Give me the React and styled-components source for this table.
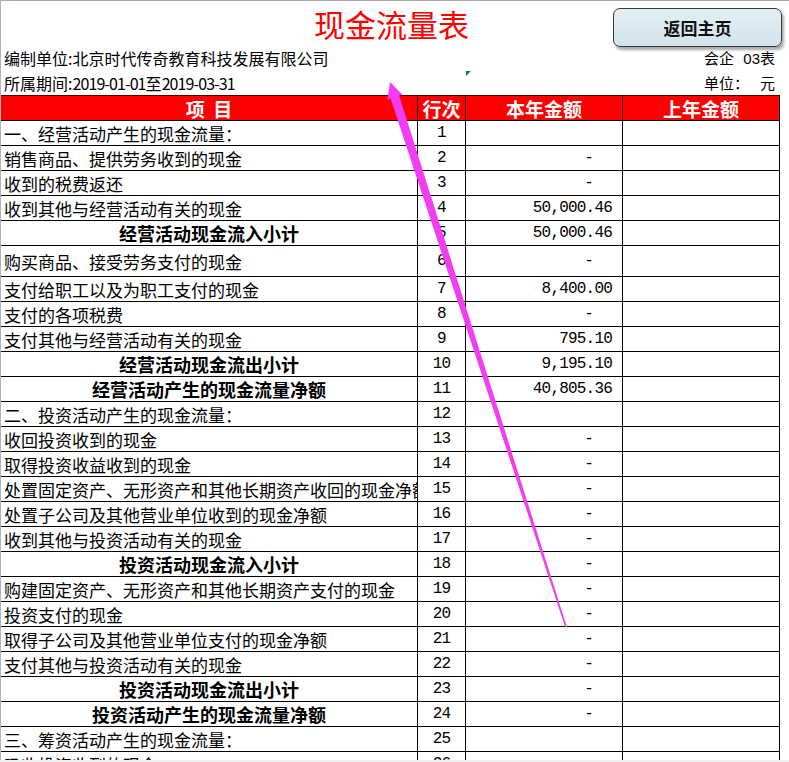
import React from "react";
import styled, { createGlobalStyle } from "styled-components";

const rows = [
  { no: 1, name: "一、经营活动产生的现金流量：", amt: "" },
  { no: 2, name: "销售商品、提供劳务收到的现金", amt: "-" },
  { no: 3, name: "收到的税费返还", amt: "-" },
  { no: 4, name: "收到其他与经营活动有关的现金", amt: "50,000.46" },
  { no: 5, name: "经营活动现金流入小计", amt: "50,000.46", bold: true },
  { no: 6, name: "购买商品、接受劳务支付的现金", amt: "-", h: 31 },
  { no: 7, name: "支付给职工以及为职工支付的现金", amt: "8,400.00" },
  { no: 8, name: "支付的各项税费", amt: "-" },
  { no: 9, name: "支付其他与经营活动有关的现金", amt: "795.10" },
  { no: 10, name: "经营活动现金流出小计", amt: "9,195.10", bold: true },
  { no: 11, name: "经营活动产生的现金流量净额", amt: "40,805.36", bold: true },
  { no: 12, name: "二、投资活动产生的现金流量：", amt: "" },
  { no: 13, name: "收回投资收到的现金", amt: "-" },
  { no: 14, name: "取得投资收益收到的现金", amt: "-" },
  { no: 15, name: "处置固定资产、无形资产和其他长期资产收回的现金净额", amt: "-" },
  { no: 16, name: "处置子公司及其他营业单位收到的现金净额", amt: "-" },
  { no: 17, name: "收到其他与投资活动有关的现金", amt: "-" },
  { no: 18, name: "投资活动现金流入小计", amt: "-", bold: true },
  { no: 19, name: "购建固定资产、无形资产和其他长期资产支付的现金", amt: "-" },
  { no: 20, name: "投资支付的现金", amt: "-" },
  { no: 21, name: "取得子公司及其他营业单位支付的现金净额", amt: "-" },
  { no: 22, name: "支付其他与投资活动有关的现金", amt: "-" },
  { no: 23, name: "投资活动现金流出小计", amt: "-", bold: true },
  { no: 24, name: "投资活动产生的现金流量净额", amt: "-", bold: true },
  { no: 25, name: "三、筹资活动产生的现金流量：", amt: "" },
  { no: 26, name: "吸收投资收到的现金", amt: "" }
];

const CJK = `"Noto Sans CJK SC", "Noto Sans", sans-serif`;
const MONO = `"Liberation Mono", "Noto Sans CJK SC", monospace`;

const App = () => {
  return (
    <>
      <GlobalStyle />
      <Page>
        <Header>
          <TitleBar>
            <Title>现金流量表</Title>
            <HomeButton>返回主页</HomeButton>
          </TitleBar>
          <InfoRow>
            <span>编制单位:北京时代传奇教育科技发展有限公司</span>
            <RightInfo>
              <span>会企</span>
              <Latin>03表</Latin>
            </RightInfo>
          </InfoRow>
          <InfoRow>
            <span>
              所属期间:<Digits>2019-01-01</Digits>至<Digits>2019-03-31</Digits>
            </span>
            <RightInfo>
              <span>单位：</span>
              <span>元</span>
            </RightInfo>
          </InfoRow>
        </Header>

        <Table>
          <HeadRow>
            <HeadCell>项&nbsp;&nbsp;目</HeadCell>
            <HeadCell>行次</HeadCell>
            <HeadCell>本年金额</HeadCell>
            <HeadCell>上年金额</HeadCell>
          </HeadRow>
          {rows.map((r) => (
            <Row key={r.no} h={r.h || 25}>
              <ItemCell bold={r.bold}>{r.name}</ItemCell>
              <NoCell>{r.no}</NoCell>
              <AmountCell dash={r.amt === "-"}>{r.amt}</AmountCell>
              <AmountCell />
            </Row>
          ))}
        </Table>

        {/* little green error marker from the sheet */}
        <Marker />

        <Arrow width="789" height="762" viewBox="0 0 789 762">
          <polygon
            points="390,82 402.5,94.7 399.2,95.8 566.8,626.8 565.2,627.2 390.6,98.6 387.3,99.7"
            fill="#f23df2"
          />
        </Arrow>
      </Page>
    </>
  );
};

const GlobalStyle = createGlobalStyle`
  body {
    margin: 0;
    background: #f0f0f0;
    font-family: ${CJK};
    color: #000;
  }
  * { box-sizing: border-box; }
`;

const Page = styled.div`
  position: relative;
  width: 789px;
  height: 760px;
  overflow: hidden;
  background: #fff;
  border-top: 1px solid #a6a9b4;
  border-left: 1px solid #aab3c8;
`;

const Header = styled.div`
  width: 781px;
  height: 94px;
  display: flex;
  flex-direction: column;
`;

const TitleBar = styled.div`
  display: grid;
  grid-template-columns: 1fr auto 1fr;
  grid-template-rows: 44px;
`;

const Title = styled.h1`
  grid-column: 2;
  margin: 0;
  font-size: 31px;
  line-height: 46px;
  font-weight: 400;
  color: #ff0000;
`;

const HomeButton = styled.button`
  grid-column: 3;
  justify-self: end;
  align-self: start;
  margin-top: 7px;
  width: 169px;
  height: 39px;
  border: 1.5px solid #3a3a3a;
  border-radius: 7px;
  background: linear-gradient(#e4eff5, #d2e3ec);
  box-shadow: 2px 3px 3px rgba(0, 0, 0, 0.35);
  font-family: ${CJK};
  font-size: 17px;
  font-weight: 700;
  color: #111;
  cursor: pointer;
`;

const InfoRow = styled.div`
  height: 25px;
  display: flex;
  align-items: center;
  justify-content: space-between;
  padding: 0 7px 0 3px;
  font-size: 16px;
  white-space: nowrap;
`;

const RightInfo = styled.div`
  width: 71px;
  display: flex;
  justify-content: space-between;
  font-size: 15px;
`;

const Latin = styled.span`
  font-family: "Liberation Sans", ${CJK};
`;

const Digits = styled.span`
  letter-spacing: -0.9px;
`;

const Table = styled.div`
  width: 779px;
`;

const Row = styled.div`
  display: grid;
  grid-template-columns: 417px 48px 157px 157px;
  height: ${(p) => p.h}px;
  border-bottom: 1px solid #000;
`;

const HeadRow = styled(Row).attrs({ h: 26 })`
  background: #ff0000;
  border-top: 1px solid #400000;
`;

const Cell = styled.div`
  display: flex;
  align-items: center;
  min-width: 0;
  border-right: 1px solid #000;
  overflow: hidden;
  white-space: nowrap;
`;

const HeadCell = styled(Cell)`
  justify-content: center;
  color: #fff;
  font-size: 19px;
  font-weight: 700;
  border-right-color: #200000;
`;

const ItemCell = styled(Cell)`
  padding: 0 3px;
  justify-content: ${(p) => (p.bold ? "center" : "flex-start")};
  font-size: ${(p) => (p.bold ? 18 : 17)}px;
  font-weight: ${(p) => (p.bold ? 700 : 400)};
`;

const NoCell = styled(Cell)`
  justify-content: center;
  font-family: ${MONO};
  font-size: 16px;
  letter-spacing: -0.8px;
`;

const AmountCell = styled(Cell)`
  justify-content: flex-end;
  padding-right: ${(p) => (p.dash ? 29 : 10)}px;
  font-family: ${MONO};
  font-size: 16px;
  letter-spacing: -0.8px;
`;

const Marker = styled.span`
  position: absolute;
  left: 465px;
  top: 70px;
  width: 0;
  height: 0;
  border-top: 5px solid #1f7a2a;
  border-right: 5px solid transparent;
`;

const Arrow = styled.svg`
  position: absolute;
  left: -1px;
  top: -1px;
  pointer-events: none;
`;

export default App;
